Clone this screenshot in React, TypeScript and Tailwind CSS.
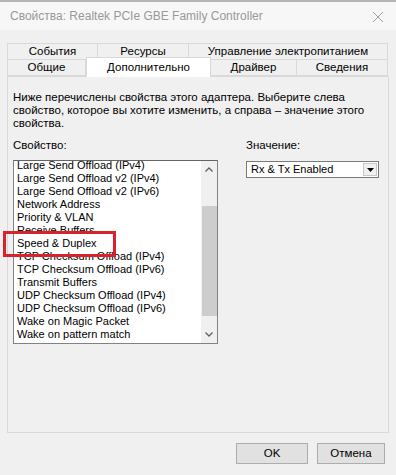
import React from 'react';

const items = [
  'Large Send Offload (IPv4)',
  'Large Send Offload v2 (IPv4)',
  'Large Send Offload v2 (IPv6)',
  'Network Address',
  'Priority & VLAN',
  'Receive Buffers',
  'Speed & Duplex',
  'TCP Checksum Offload (IPv4)',
  'TCP Checksum Offload (IPv6)',
  'Transmit Buffers',
  'UDP Checksum Offload (IPv4)',
  'UDP Checksum Offload (IPv6)',
  'Wake on Magic Packet',
  'Wake on pattern match',
];

function Tab({ label, width, selected }: { label: string; width: number; selected?: boolean }) {
  return (
    <div
      style={{ width }}
      className={
        selected
          ? 'relative z-10 -mt-[2px] -mb-px h-[20px] bg-white border border-b-0 border-[#d9d9d9] flex items-center justify-center'
          : 'h-[17px] bg-[#f0f0f0] border border-[#d9d9d9] -ml-px first:ml-0 flex items-center justify-center'
      }
    >
      {label}
    </div>
  );
}

export default function App() {
  return (
    <div
      className="relative w-[396px] h-[475px] bg-[#f0f0f0] border-t-2 border-[#b5b5b5] flex flex-col text-[11.5px] text-black overflow-hidden"
      style={{ fontFamily: '"Liberation Sans", Arial, sans-serif' }}
    >
      {/* title bar */}
      <div className="h-[28px] bg-[#f7f7f7] flex items-center justify-between pl-[10px] pr-[12px]">
        <span className="text-[12px] text-[#999]">Свойства: Realtek PCIe GBE Family Controller</span>
        <svg width="12" height="12" viewBox="0 0 12 12" className="mt-px">
          <path d="M1 1 L11 11 M11 1 L1 11" stroke="#a0a0a0" strokeWidth="1" />
        </svg>
      </div>

      {/* tabs */}
      <div className="mt-[13px] px-[7px] flex flex-col">
        <div className="flex">
          <Tab label="События" width={91} />
          <Tab label="Ресурсы" width={92} />
          <Tab label="Управление электропитанием" width={200} />
        </div>
        <div className="flex items-end -mt-px">
          <Tab label="Общие" width={79} />
          <Tab label="Дополнительно" width={125} selected />
          <Tab label="Драйвер" width={87} />
          <Tab label="Сведения" width={92} />
        </div>
      </div>

      {/* panel */}
      <div className="mx-[7px] h-[357px] bg-[#f0f0f0] border border-[#d9d9d9] pt-[14px] pl-[5px] pr-[4px] flex flex-col">
        <p className="leading-[13px] w-[362px]">
          Ниже перечислены свойства этого адаптера. Выберите слева свойство, которое вы хотите изменить, а справа – значение этого свойства.
        </p>

        <div className="mt-[9px] flex gap-[28px]">
          <div className="flex flex-col">
            <span className="leading-[13px]">Свойство:</span>
            <div className="mt-[8px] w-[205px] h-[184px] bg-white border border-[#828282] border-t-[#646464] flex overflow-hidden">
              <div className="flex-1 relative overflow-hidden">
                <div className="absolute left-[3px] top-[-2px] flex flex-col text-[11px]">
                  {items.map((it) => (
                    <div key={it} className="h-[13px] leading-[13px] whitespace-nowrap">
                      {it}
                    </div>
                  ))}
                </div>
              </div>
              <div className="w-[16px] bg-[#f0f0f0] flex flex-col items-center">
                <div className="h-[17px] w-full flex items-center justify-center">
                  <svg width="8" height="5" viewBox="0 0 8 5">
                    <path d="M0.5 4.5 L4 1 L7.5 4.5" fill="none" stroke="#606060" strokeWidth="1.3" />
                  </svg>
                </div>
                <div className="h-[28px]" />
                <div className="w-[15px] h-[110px] bg-[#cdcdcd]" />
                <div className="flex-1" />
                <div className="h-[17px] w-full flex items-center justify-center">
                  <svg width="8" height="5" viewBox="0 0 8 5">
                    <path d="M0.5 0.5 L4 4 L7.5 0.5" fill="none" stroke="#606060" strokeWidth="1.3" />
                  </svg>
                </div>
              </div>
            </div>
          </div>

          <div className="flex flex-col">
            <span className="leading-[13px]">Значение:</span>
            <div className="mt-[9px] w-[133px] h-[17px] bg-white border border-[#7a7a7a] flex items-center">
              <span className="flex-1 pl-[4px] text-[11px]">Rx &amp; Tx Enabled</span>
              <div className="w-[14px] h-[13px] mr-px bg-[#f0f0f0] border border-[#c8c8c8] flex items-center justify-center">
                <svg width="7" height="4" viewBox="0 0 7 4">
                  <path d="M0 0 L7 0 L3.5 4 Z" fill="#000" />
                </svg>
              </div>
            </div>
          </div>
        </div>
      </div>

      {/* buttons */}
      <div className="flex justify-end gap-[9px] pr-[11px] mt-[10px]">
        <button className="w-[72px] h-[21px] bg-[#e1e1e1] border border-[#adadad]">OK</button>
        <button className="w-[68px] h-[21px] bg-[#e1e1e1] border border-[#adadad]">Отмена</button>
      </div>

      {/* red highlight over "Speed & Duplex" */}
      <div className="pointer-events-none absolute left-[3px] top-[229px] w-[113px] h-[26px] border-[3px] border-[#d9232a]" />
    </div>
  );
}
